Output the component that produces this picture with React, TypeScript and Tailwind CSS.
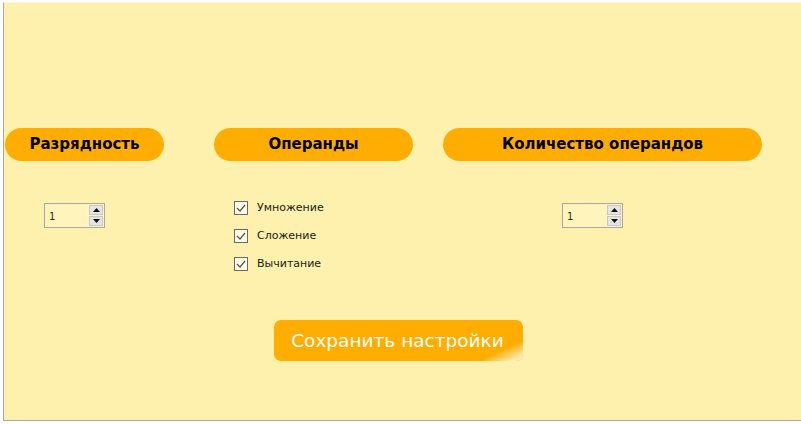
import React from 'react';

const font = { fontFamily: '"DejaVu Sans", Verdana, sans-serif' };

const Pill: React.FC<{ label: string; className: string }> = ({ label, className }) => (
  <div
    className={`h-[33px] rounded-full bg-[#ffad00] flex items-center justify-center text-[15px] font-bold text-black ${className}`}
  >
    {label}
  </div>
);

const SpinBox: React.FC<{ value: number; className?: string }> = ({ value, className = '' }) => (
  <div className={`flex w-[61px] h-[25px] border border-[#a8a8a8] bg-[#fff4bc] ${className}`}>
    <div className="flex-1 flex items-center pl-[4px] pt-[1px] text-[10px] text-[#3a2a00]">{value}</div>
    <div className="w-[15px] flex flex-col gap-[1px] py-[1px] pr-[1px]">
      <div className="flex-1 bg-[#e4e4e4] border border-[#c8c8c8] flex items-center justify-center">
        <svg width="7" height="4" viewBox="0 0 7 4"><path d="M0 4 L3.5 0 L7 4 Z" fill="#111" /></svg>
      </div>
      <div className="flex-1 bg-[#e4e4e4] border border-[#c8c8c8] flex items-center justify-center">
        <svg width="7" height="4" viewBox="0 0 7 4"><path d="M0 0 L3.5 4 L7 0 Z" fill="#111" /></svg>
      </div>
    </div>
  </div>
);

const Check: React.FC<{ label: string }> = ({ label }) => (
  <div className="flex items-center h-[14px]">
    <div className="w-[14px] h-[14px] border border-[#6a6a6a] bg-[#fffbe6] flex items-center justify-center">
      <svg width="10" height="8" viewBox="0 0 10 8">
        <path d="M1 4 L4 7 L9 1" fill="none" stroke="#555" strokeWidth="1.2" />
      </svg>
    </div>
    <span className="ml-[9px] text-[11px] text-[#1a1a1a]">{label}</span>
  </div>
);

export default function App() {
  return (
    <div className="w-[801px] h-[424px] bg-white overflow-hidden" style={font}>
      <div className="ml-[3px] mt-[2px] w-[798px] h-[419px] bg-[#fef1ae] border-l border-b border-[#a9a9a0] border-t border-t-[#fff8d8] pt-[125px]">
        <div className="flex items-start">
          <div className="ml-[1px] w-[159px]">
            <Pill label="Разрядность" className="w-[159px]" />
            <SpinBox value={1} className="mt-[42px] ml-[39px]" />
          </div>
          <div className="ml-[50px] w-[199px]">
            <Pill label="Операнды" className="w-[199px]" />
            <div className="mt-[40px] ml-[20px] flex flex-col gap-[14px]">
              <Check label="Умножение" />
              <Check label="Сложение" />
              <Check label="Вычитание" />
            </div>
          </div>
          <div className="ml-[30px] w-[319px]">
            <Pill label="Количество операндов" className="w-[319px]" />
            <SpinBox value={1} className="mt-[42px] ml-[119px]" />
          </div>
        </div>
        <div className="mt-[49px] ml-[270px]">
          <button className="relative overflow-hidden w-[249px] h-[41px] rounded-[7px] bg-[#ffad00] text-white text-[18.5px] flex items-center justify-center pr-[2px]">
            Сохранить настройки
            <span className="absolute right-0 bottom-0 w-[60px] h-[24px] bg-[linear-gradient(155deg,transparent_60%,#ffe9a8_88%,#fff6d6_100%)]" />
          </button>
        </div>
      </div>
    </div>
  );
}
